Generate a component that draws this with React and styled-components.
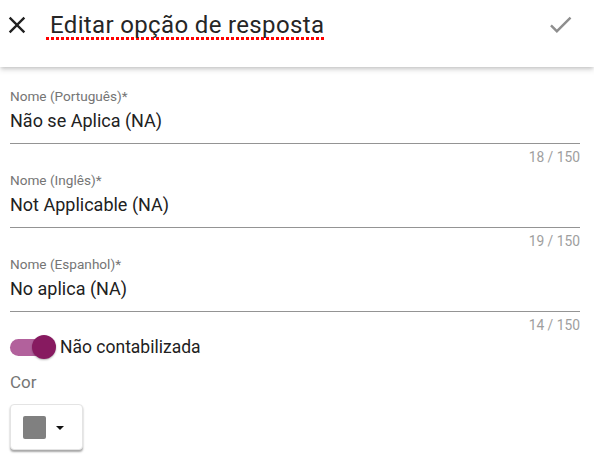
import React from "react";
import styled, { createGlobalStyle } from "styled-components";

const GlobalStyle = createGlobalStyle`
    body {
        margin: 0;
        background: #ffffff;
        font-family: Roboto, "Noto Sans", sans-serif;
    }
`;

const fields = [
    { label: "Nome (Português)*", value: "Não se Aplica (NA)" },
    { label: "Nome (Inglês)*", value: "Not Applicable (NA)" },
    { label: "Nome (Espanhol)*", value: "No aplica (NA)" },
];

function CloseIcon() {
    return (
        <svg width="28" height="28" viewBox="0 0 24 24" fill="#212121">
            <path d="M19 6.41L17.59 5 12 10.59 6.41 5 5 6.41 10.59 12 5 17.59 6.41 19 12 13.41 17.59 19 19 17.59 13.41 12z" />
        </svg>
    );
}

function CheckIcon() {
    return (
        <svg width="29" height="29" viewBox="0 0 24 24" fill="#8e8e8e">
            <path d="M9 16.17L4.83 12l-1.42 1.41L9 19 21 7l-1.41-1.41z" />
        </svg>
    );
}

function App() {
    return (
        <Page>
            <GlobalStyle />
            <Toolbar>
                <IconButton><CloseIcon /></IconButton>
                <Title>Editar opção de resposta</Title>
                <SaveButton><CheckIcon /></SaveButton>
            </Toolbar>
            <Form>
                <FieldList>
                    {fields.map((f) => (
                        <Field key={f.label}>
                            <Label>{f.label}</Label>
                            <Value>{f.value}</Value>
                            <Counter>{f.value.length} / 150</Counter>
                        </Field>
                    ))}
                </FieldList>
                <ToggleRow>
                    <Switch>
                        <Track />
                        <Thumb />
                    </Switch>
                    <ToggleLabel>Não contabilizada</ToggleLabel>
                </ToggleRow>
                <SectionLabel>Cor</SectionLabel>
                <ColorButton>
                    <Swatch $color="#808080" />
                    <Caret />
                </ColorButton>
            </Form>
        </Page>
    );
}

const Page = styled.div`
    width: 594px;
    min-height: 464px;
    background: #ffffff;
`;

const Toolbar = styled.div`
    display: flex;
    align-items: flex-start;
    height: 67px;
    box-sizing: border-box;
    padding: 11px 19px 0 3px;
    background: #ffffff;
    box-shadow: 0 2px 4px -1px rgba(0, 0, 0, 0.2), 0 4px 5px 0 rgba(0, 0, 0, 0.08);
    position: relative;
    z-index: 1;
`;

const IconButton = styled.div`
    display: flex;
    width: 28px;
    height: 28px;
`;

const SaveButton = styled.div`
    display: flex;
    margin-left: auto;
    margin-top: -1px;
`;

const Title = styled.span`
    margin-left: 15px;
    padding: 0 2px 3px 4px;
    font-size: 24px;
    letter-spacing: 0.35px;
    line-height: 28px;
    color: #262626;
    background-image: linear-gradient(to right, #ff0000 3px, transparent 3px);
    background-size: 5px 3px;
    background-repeat: repeat-x;
    background-position: 0 26px;
`;

const Form = styled.div`
    display: flex;
    flex-direction: column;
    align-items: flex-start;
    padding: 21px 14px 0 10px;
`;

const FieldList = styled.div`
    display: flex;
    flex-direction: column;
    gap: 7px;
    width: 100%;
`;

const Field = styled.div`
    display: flex;
    flex-direction: column;
`;

const Label = styled.span`
    font-size: 13.6px;
    line-height: 16px;
    color: #757575;
`;

const Value = styled.div`
    margin-top: 5px;
    padding-bottom: 10px;
    font-size: 18px;
    line-height: 24px;
    color: #212121;
    border-bottom: 1px solid #949494;
`;

const Counter = styled.span`
    margin-top: 5px;
    align-self: flex-end;
    font-size: 13.8px;
    line-height: 16px;
    color: #9e9e9e;
`;

const ToggleRow = styled.div`
    display: flex;
    align-items: center;
    gap: 4px;
    height: 24px;
    margin-top: 2px;
`;

const Switch = styled.div`
    position: relative;
    width: 46px;
    height: 24px;
`;

const Track = styled.div`
    position: absolute;
    left: 0;
    top: 4px;
    width: 40px;
    height: 17px;
    border-radius: 9px;
    background: #b2619c;
`;

const Thumb = styled.div`
    position: absolute;
    right: 0;
    top: 0;
    width: 24px;
    height: 24px;
    border-radius: 50%;
    background: #871a60;
    box-shadow: 0 1px 2px rgba(0, 0, 0, 0.3);
`;

const ToggleLabel = styled.span`
    font-size: 17.5px;
    line-height: 24px;
    color: #212121;
`;

const SectionLabel = styled.span`
    margin-top: 12px;
    font-size: 17px;
    line-height: 22px;
    color: #757575;
`;

const ColorButton = styled.div`
    display: flex;
    align-items: center;
    gap: 10px;
    margin-top: 11px;
    width: 73px;
    height: 46px;
    box-sizing: border-box;
    padding-left: 12px;
    border: 1px solid #e4e4e4;
    border-radius: 4px;
    background: #ffffff;
    box-shadow: 0 2px 2px rgba(0, 0, 0, 0.35);
`;

const Swatch = styled.div`
    width: 23px;
    height: 23px;
    border-radius: 2px;
    background: ${(p) => p.$color};
`;

const Caret = styled.div`
    width: 0;
    height: 0;
    margin-top: 2px;
    border-left: 4px solid transparent;
    border-right: 4px solid transparent;
    border-top: 4px solid #111111;
`;

export default App;
